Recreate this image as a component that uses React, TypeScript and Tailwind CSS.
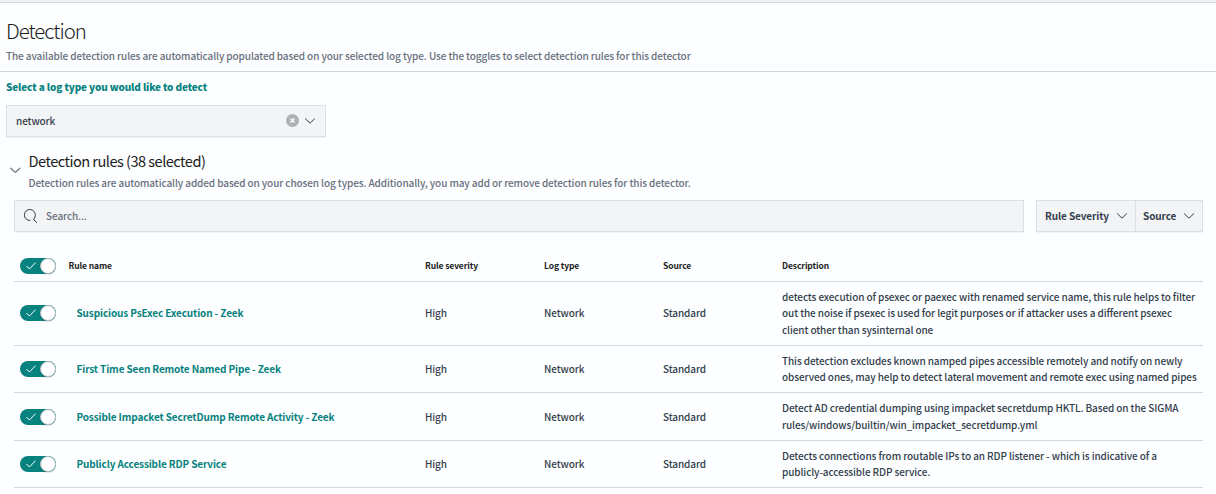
import React from "react";

type Rule = { name: string; height: string; nudge: string; lines: string[] };

const rules: Rule[] = [
  {
    name: "Suspicious PsExec Execution - Zeek",
    height: "h-16",
    nudge: "pb-px",
    lines: [
      "detects execution of psexec or paexec with renamed service name, this rule helps to filter",
      "out the noise if psexec is used for legit purposes or if attacker uses a different psexec",
      "client other than sysinternal one",
    ],
  },
  {
    name: "First Time Seen Remote Named Pipe - Zeek",
    height: "h-[47px]",
    nudge: "",
    lines: [
      "This detection excludes known namped pipes accessible remotely and notify on newly",
      "observed ones, may help to detect lateral movement and remote exec using named pipes",
    ],
  },
  {
    name: "Possible Impacket SecretDump Remote Activity - Zeek",
    height: "h-12",
    nudge: "pt-px",
    lines: [
      "Detect AD credential dumping using impacket secretdump HKTL. Based on the SIGMA",
      "rules/windows/builtin/win_impacket_secretdump.yml",
    ],
  },
  {
    name: "Publicly Accessible RDP Service",
    height: "h-[47px]",
    nudge: "",
    lines: [
      "Detects connections from routable IPs to an RDP listener - which is indicative of a",
      "publicly-accessible RDP service.",
    ],
  },
];

function Chevron() {
  return (
    <svg width="12" height="8" viewBox="0 0 12 8" fill="none" className="shrink-0 text-[#343f4d]">
      <path d="M1.4 1.8 6 6.2l4.6-4.4" stroke="currentColor" strokeWidth="1" strokeLinecap="round" strokeLinejoin="round" />
    </svg>
  );
}

function Toggle() {
  return (
    <span className="flex h-4 w-9 items-center justify-between rounded-full bg-[#07827e] pl-[6px]">
      <svg width="10" height="8" viewBox="0 0 10 8" fill="none">
        <path d="M.6 4.2 3.4 7 9.4.8" stroke="#fff" strokeWidth="1" strokeLinecap="round" strokeLinejoin="round" />
      </svg>
      <span className="size-4 rounded-full border border-[#b4bcc0] bg-white shadow-[0_1px_1px_rgba(0,0,0,0.12)]" />
    </span>
  );
}

const columns = "grid grid-cols-[54px_357px_119px_119px_119px_421px] items-center border-b border-[#d3d8dd]";

export default function App() {
  return (
    <div className="h-[494px] overflow-hidden bg-[#fcfeff] font-['Noto_Sans_CJK_JP','Noto_Sans_CJK_SC',sans-serif] text-[10px] font-medium tracking-[-0.105px] text-[#343f4d] whitespace-nowrap">
      <div className="h-[3px] border-b border-[#d3d8dd] bg-[#f0f2f4]" />
      <header className="h-[69px] border-b border-[#cfd4d8] pl-[6px] pt-[13px]">
        <h1 className="text-[20.4px] leading-7 font-light tracking-[-1px] text-[#1a1c21]">Detection</h1>
        <p className="mt-[4px] leading-4 text-[#69707d]">
          The available detection rules are automatically populated based on your selected log type. Use the toggles to select detection rules for this detector
        </p>
      </header>
      <div className="pl-[6px] pt-[7px]">
        <div className="leading-4 font-black tracking-[-0.13px] text-[#07827e]">Select a log type you would like to detect</div>
        <div className="mt-[10px] flex h-8 w-80 items-center border border-[#d9e1e3] bg-[#f3f4f6] pl-[9px] pr-[9px] shadow-[0_1px_1px_rgba(0,0,0,0.04)]">
          <span className="flex-1 pb-px leading-4">network</span>
          <svg width="13" height="13" viewBox="0 0 13 13" className="mr-[5px] mb-px">
            <circle cx="6.5" cy="6.5" r="6.5" fill="#abb1b7" />
            <path d="m4.6 4.6 3.8 3.8m0-3.8L4.6 8.4" stroke="#fff" strokeWidth="1.4" />
          </svg>
          <Chevron />
        </div>
      </div>
      <section className="flex h-[63px] pl-[9px] pt-[14px]">
        <div className="w-[19.5px] pt-[15px]">
          <svg width="12" height="8" viewBox="0 0 12 8" fill="none" className="text-[#747b87]">
            <path d="M1.8 2.3 5.5 5.7Q6.3 6.4 7.1 5.7L10.8 2.3" stroke="currentColor" strokeWidth="1.3" strokeLinecap="round" />
          </svg>
        </div>
        <div>
          <h2 className="text-[14.6px] leading-5 font-normal tracking-[-0.53px] text-[#1a1c21]">Detection rules (38 selected)</h2>
          <p className="mt-[4px] leading-4 text-[#69707d]">
            Detection rules are automatically added based on your chosen log types. Additionally, you may add or remove detection rules for this detector.
          </p>
        </div>
      </section>
      <div className="flex gap-3 pl-[14px]">
        <div className="flex h-8 w-[1010px] items-center border border-[#d9e1e3] bg-[#f3f4f6] pl-[9px] shadow-[0_1px_1px_rgba(0,0,0,0.04)]">
          <svg width="14" height="14" viewBox="0 0 14 14" fill="none" className="mr-2">
            <path d="M5.8 11.5A5.5 5.5 0 1 1 11.3 6.5C11.3 7.8 10.7 9 9.9 10V11L12.7 13.4" stroke="#343f4d" strokeWidth="1" strokeLinecap="round" strokeLinejoin="round" />
          </svg>
          <span className="pb-px leading-4 text-[#69707d]">Search...</span>
        </div>
        <div className="flex h-8 w-[167px] border border-[#d9e1e3] bg-[#f3f4f6] font-bold shadow-[0_1px_1px_rgba(0,0,0,0.04)]">
          <div className="flex w-[99px] items-center justify-between border-r border-[#d9e1e3] pl-2 pr-[7px]">
            <span className="pb-px leading-4">Rule Severity</span>
            <Chevron />
          </div>
          <div className="flex flex-1 items-center justify-between pl-[7px] pr-[7px]">
            <span className="pb-px leading-4">Source</span>
            <Chevron />
          </div>
        </div>
      </div>
      <div className="w-[1203px] pl-[14px] pt-[18px]">
        <div className={columns + " h-8 text-[8.5px] font-bold text-[#1a1c21]"}>
          <span className="pl-[6px]"><Toggle /></span>
          <span className="pl-[0.5px]">Rule name</span>
          <span>Rule severity</span>
          <span>Log type</span>
          <span>Source</span>
          <span>Description</span>
        </div>
        {rules.map((rule) => (
          <div key={rule.name} className={columns + " " + rule.height}>
            <span className={"pl-[6px] " + rule.nudge}><Toggle /></span>
            <span className={"pl-[8.5px] leading-4 font-bold tracking-[-0.13px] text-[#07827e] " + rule.nudge}>{rule.name}</span>
            <span className={"leading-4 " + rule.nudge}>High</span>
            <span className={"leading-4 " + rule.nudge}>Network</span>
            <span className={"leading-4 " + rule.nudge}>Standard</span>
            <div className="leading-[16.5px]">
              {rule.lines.map((line) => <div key={line}>{line}</div>)}
            </div>
          </div>
        ))}
      </div>
    </div>
  );
}
